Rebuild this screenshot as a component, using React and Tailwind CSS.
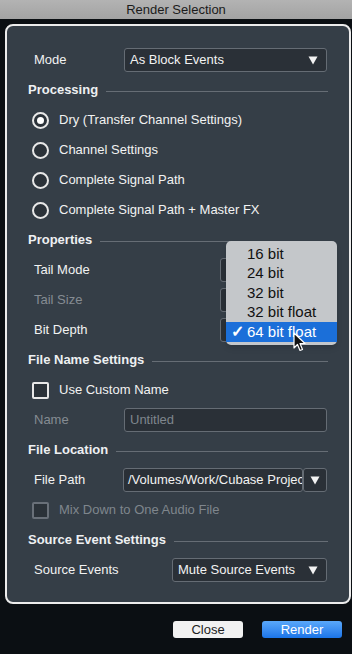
import React from "react";

const font = { fontFamily: '"Liberation Sans", Arial, sans-serif' };

const Caret = () => (
    <svg width="10" height="9" viewBox="0 0 10 9" className="shrink-0">
        <path d="M0.5 0.5 H9.5 L5 8.5 Z" fill="#f2f2f2" />
    </svg>
);

const Header = ({ title }) => (
    <div className="h-[30px] flex items-center gap-2">
        <span className="text-[13px] font-bold text-[#eef0f2] whitespace-nowrap">{title}</span>
        <div className="flex-1 h-px bg-[#666d75] mt-[2px]" />
    </div>
);

const Radio = ({ label, checked }) => (
    <div className="h-[30px] flex items-center gap-[10px] pl-[4px]">
        <div className="w-[17px] h-[17px] rounded-full border-2 border-[#e8e8e8] bg-[#2b3239] flex items-center justify-center">
            {checked && <div className="w-[7px] h-[7px] rounded-full bg-white" />}
        </div>
        <span className="text-[13px] text-[#f2f2f2]">{label}</span>
    </div>
);

const Checkbox = ({ label, disabled }) => (
    <div className="h-[30px] flex items-center gap-[10px] pl-[4px]">
        <div
            className={`w-[17px] h-[17px] rounded-[2px] border-2 bg-[#2b3239] ${disabled ? "border-[#697079]" : "border-[#e8e8e8]"}`}
        />
        <span className={`text-[13px] ${disabled ? "text-[#7f868d]" : "text-[#f2f2f2]"}`}>{label}</span>
    </div>
);

const Box = ({ className = "", children }) => (
    <div className={`h-[24px] rounded-[3px] border border-[#656c74] bg-[#2a3037] flex items-center ${className}`}>
        {children}
    </div>
);

const Label = ({ children, dim, width = "w-[90px]" }) => (
    <span className={`${width} shrink-0 ml-[6px] text-[13px] ${dim ? "text-[#858c93]" : "text-[#f2f2f2]"}`}>
        {children}
    </span>
);

const Cursor = () => (
    <svg width="14" height="21" viewBox="0 0 14 21" className="absolute left-[293px] top-[332px]">
        <path d="M1 1 L1 16 L4.5 12.5 L7 18.5 L9.5 17.5 L7 11.5 L12 11.5 Z" fill="#111" stroke="#fff" strokeWidth="1.2" strokeLinejoin="round" />
    </svg>
);

export default function App() {
    const bits = ["16 bit", "24 bit", "32 bit", "32 bit float"];

    return (
        <div className="relative w-[352px] h-[654px] bg-[#0b0f13] overflow-hidden" style={font}>
            {/* title bar */}
            <div className="h-[19px] bg-gradient-to-b from-[#b3b3b3] to-[#a3a3a3] flex items-center justify-center">
                <span className="text-[13px] text-[#1b1b1b]">Render Selection</span>
            </div>

            {/* main panel */}
            <div className="mt-[5px] ml-[5px] w-[346px] h-[580px] rounded-[8px] border-2 border-[#ececec] bg-[#353e47] pt-[19px] px-[21px]">
                <div className="h-[30px] flex items-center">
                    <Label>Mode</Label>
                    <Box className="w-[203px] pl-[5px] pr-[8px] justify-between">
                        <span className="text-[13px] text-[#f2f2f2]">As Block Events</span>
                        <Caret />
                    </Box>
                </div>

                <Header title="Processing" />
                <Radio label="Dry (Transfer Channel Settings)" checked />
                <Radio label="Channel Settings" />
                <Radio label="Complete Signal Path" />
                <Radio label="Complete Signal Path + Master FX" />

                <Header title="Properties" />
                <div className="h-[30px] flex items-center">
                    <Label width="w-[186px]">Tail Mode</Label>
                    <Box className="w-[107px]" />
                </div>
                <div className="h-[30px] flex items-center">
                    <Label width="w-[186px]" dim>Tail Size</Label>
                    <Box className="w-[107px]" />
                </div>
                <div className="h-[30px] flex items-center">
                    <Label width="w-[186px]">Bit Depth</Label>
                    <Box className="w-[107px]" />
                </div>

                <Header title="File Name Settings" />
                <Checkbox label="Use Custom Name" />
                <div className="h-[30px] flex items-center">
                    <Label dim>Name</Label>
                    <Box className="w-[203px] pl-[5px]">
                        <span className="text-[13px] text-[#7f868d]">Untitled</span>
                    </Box>
                </div>

                <Header title="File Location" />
                <div className="h-[30px] flex items-center">
                    <Label width="w-[89px]">File Path</Label>
                    <Box className="w-[180px] pl-[4px] overflow-hidden">
                        <span className="text-[13px] text-[#f2f2f2] whitespace-nowrap">/Volumes/Work/Cubase Projec</span>
                    </Box>
                    <Box className="w-[24px] justify-center">
                        <Caret />
                    </Box>
                </div>
                <Checkbox label="Mix Down to One Audio File" disabled />

                <Header title="Source Event Settings" />
                <div className="h-[30px] flex items-center">
                    <Label width="w-[138px]">Source Events</Label>
                    <Box className="w-[155px] pl-[5px] pr-[8px] justify-between">
                        <span className="text-[13px] text-[#f2f2f2]">Mute Source Events</span>
                        <Caret />
                    </Box>
                </div>
            </div>

            {/* buttons */}
            <div className="mt-[17px] pr-[10px] flex justify-end gap-[19px]">
                <button className="w-[70px] h-[17px] rounded-[3px] bg-[#f1f1f1] text-[13px] text-[#1e1e1e] leading-none">
                    Close
                </button>
                <button className="w-[80px] h-[17px] rounded-[3px] bg-gradient-to-b from-[#5aa8fa] to-[#1a74e8] text-[13px] text-white leading-none">
                    Render
                </button>
            </div>

            {/* bit depth popup */}
            <div className="absolute left-[226px] top-[241px] w-[111px] h-[104px] rounded-[5px] bg-[#c4c7ca] shadow-md pt-[3px]">
                {bits.map((b) => (
                    <div key={b} className="h-[19.5px] flex items-center pl-[21px] text-[15px] text-[#111]">
                        {b}
                    </div>
                ))}
                <div className="h-[20px] bg-[#1b6fd9] flex items-center text-[15px] text-white">
                    <span className="w-[21px] pl-[5px] text-[16px] font-bold">✓</span>
                    <span>64 bit float</span>
                </div>
            </div>
            <Cursor />
        </div>
    );
}
